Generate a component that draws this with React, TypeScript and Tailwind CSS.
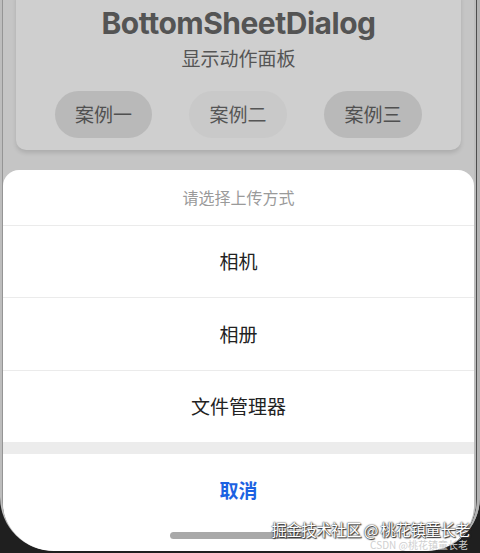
import React from "react";

const cjk = { fontFamily: '"Noto Sans CJK SC", "Noto Sans", sans-serif' };

export default function App() {
  return (
    <div className="relative w-[480px] h-[553px] bg-[#1f1f1f] overflow-hidden" style={cjk}>
      <div className="h-[551px] rounded-b-[54px] bg-[#bdbdbd] pl-[2px] overflow-hidden">
        <div className="h-full rounded-b-[52px] border-r-[3px] border-[#b3b3b3] overflow-hidden">
          <div className="h-full rounded-b-[50px] border-r border-[#4d4d4d] overflow-hidden">
            <div className="h-full rounded-b-[48px] border-l border-[#959595] pr-[2px] bg-[#bcbcbc] overflow-hidden">
              <div className="h-full flex flex-col bg-[#c5c5c5] rounded-b-[46px] overflow-hidden">
                {/* dimmed page card */}
                <div className="mx-[13px] -mt-[12px] h-[162px] rounded-[10px] bg-[#cfcfcf] shadow-[0_3px_4px_rgba(0,0,0,0.12)] flex flex-col items-center pt-[16px]">
                  <div
                    className="text-[30px] leading-[38px] font-bold text-[#545454] tracking-[-0.5px]"
                    style={{ fontFamily: '"Inter", "Noto Sans", sans-serif' }}
                  >
                    BottomSheetDialog
                  </div>
                  <div className="text-[19px] leading-[26px] text-[#555555] mt-[3px]">显示动作面板</div>
                  <div className="flex gap-[37px] mt-[20px]">
                    <div className="w-[97px] h-[47px] rounded-full bg-[#b9b9b9] flex items-center justify-center text-[19px] text-[#505050]">案例一</div>
                    <div className="w-[98px] h-[47px] rounded-full bg-[#c9c9c9] flex items-center justify-center text-[19px] text-[#555555]">案例二</div>
                    <div className="w-[98px] h-[47px] rounded-full bg-[#b9b9b9] flex items-center justify-center text-[19px] text-[#505050]">案例三</div>
                  </div>
                </div>

                {/* bottom sheet */}
                <div className="mt-[20px] flex-1 bg-white rounded-t-[16px] flex flex-col">
                  <div className="h-[56px] border-b border-[#ebebeb] flex items-center justify-center text-[16px] text-[#9a9a9a] pb-[2px]">请选择上传方式</div>
                  <div className="h-[72px] border-b border-[#ebebeb] flex items-center justify-center text-[19px] text-[#222222]">相机</div>
                  <div className="h-[73px] border-b border-[#ebebeb] flex items-center justify-center text-[19px] text-[#222222]">相册</div>
                  <div className="h-[71px] flex items-center justify-center text-[19px] text-[#222222]">文件管理器</div>
                  <div className="h-[12px] bg-[#ececec]" />
                  <div className="h-[72px] flex items-center justify-center text-[19px] font-bold text-[#1c62e2]">取消</div>
                  <div className="mt-[6px] flex justify-center pr-[2px]">
                    <div className="w-[136px] h-[7px] rounded-full bg-[#a9a9a9]" />
                  </div>
                </div>
              </div>
            </div>
          </div>
        </div>
      </div>

      {/* watermark overlay */}
      <div className="absolute right-[10px] bottom-[3px] flex flex-col items-end">
        <div className="text-[15.5px] leading-[18px] tracking-[-0.6px] text-white [text-shadow:0_0_1px_#333,0_0_2px_#333,1px_1px_1px_#333]">掘金技术社区 @ 桃花镇童长老</div>
        <div className="text-[10px] leading-[11px] text-[#d0d0d0] mt-[1px] pr-[2px]">CSDN @桃花镇童长老</div>
      </div>
    </div>
  );
}
